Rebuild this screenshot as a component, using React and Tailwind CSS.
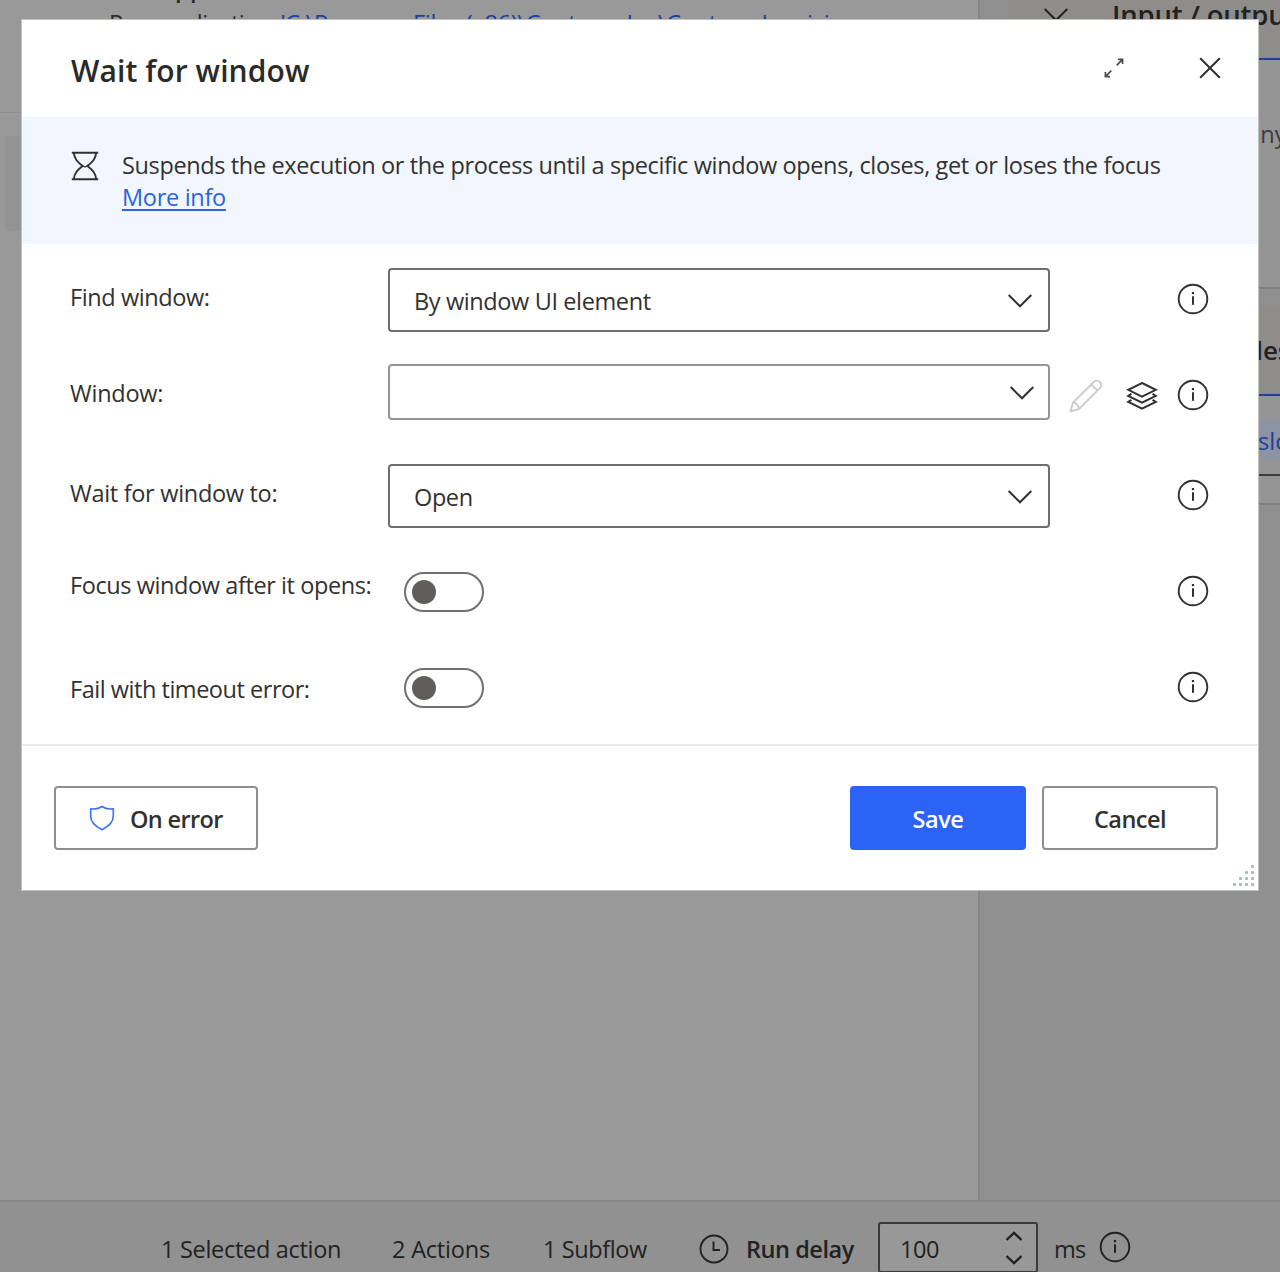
import React from "react";

function Info({ className = "" }) {
  return (
    <svg className={`h-8 w-8 shrink-0 ${className}`} viewBox="0 0 32 32" fill="none">
      <circle cx="16" cy="16" r="14.3" stroke="currentColor" strokeWidth="1.9" />
      <rect x="15" y="13.3" width="2" height="8.5" fill="currentColor" />
      <rect x="14.9" y="9" width="2.2" height="2.2" fill="currentColor" />
    </svg>
  );
}

function Chevron({ className = "" }) {
  return (
    <svg className={`h-4 w-[26px] shrink-0 ${className}`} viewBox="0 0 26 16" fill="none">
      <path d="M1.7 2 L13 13.3 L24.3 2" stroke="currentColor" strokeWidth="2" />
    </svg>
  );
}

function Hourglass() {
  return (
    <svg className="h-[32px] w-[30px] shrink-0" viewBox="0 0 30 32" fill="none" stroke="#323130" strokeWidth="1.9">
      <path d="M1.8 2.7 H28.2 M1.8 29.3 H28.2" />
      <path d="M3.8 2.7 C4.5 9 7 11.5 12.5 16 C7 20.5 4.5 23 3.8 29.3" />
      <path d="M26.2 2.7 C25.5 9 23 11.5 17.5 16 C23 20.5 25.5 23 26.2 29.3" />
      <path d="M12 15.5 L15 17 L18 15.5" strokeWidth="1.2" />
    </svg>
  );
}

function Expand() {
  return (
    <svg className="h-[22px] w-[22px]" viewBox="0 0 22 22" fill="none" stroke="#4a4a55" strokeWidth="1.7">
      <path d="M13.7 8.3 L19.3 2.7 M15 2.4 H19.6 V7" />
      <path d="M8.3 13.7 L2.7 19.3 M7 19.6 H2.4 V15" />
    </svg>
  );
}

function Close() {
  return (
    <svg className="h-[22px] w-[22px]" viewBox="0 0 22 22" fill="none">
      <path d="M1.2 1.2 L20.8 20.8 M20.8 1.2 L1.2 20.8" stroke="#323130" strokeWidth="2" />
    </svg>
  );
}

function Pencil() {
  return (
    <svg className="h-[34px] w-[34px] shrink-0" viewBox="0 0 34 34" fill="none" stroke="#cfcdcb" strokeWidth="1.9" strokeLinejoin="round">
      <path d="M1.5 32.5 L4 23.5 L25 2.8 C26.5 1.3 29 1.2 30.8 3 C32.6 4.8 32.6 7.3 31 8.9 L10 30 Z" />
      <path d="M22.3 5.5 L28.3 11.5 M4 23.5 C7.5 24 9.5 26 10 30" />
    </svg>
  );
}

function Layers() {
  return (
    <svg className="h-[30px] w-[32px] shrink-0" viewBox="0 0 32 30" fill="none" stroke="#323130" strokeWidth="2">
      <path d="M16 2 L29.8 8.8 L16 15.6 L2.2 8.8 Z" />
      <path d="M5.5 12.8 L2.2 14.8 L16 21.7 L29.8 14.8 L26.5 12.8" />
      <path d="M5.5 18.8 L2.2 20.8 L16 27.7 L29.8 20.8 L26.5 18.8" />
    </svg>
  );
}

function Shield() {
  return (
    <svg className="h-[26px] w-[26px]" viewBox="0 0 26 26" fill="none" stroke="#3a70f6" strokeWidth="1.6" strokeLinejoin="round">
      <path d="M13 1.5 C10.5 3.3 6 4.4 1.7 3.8 V11 C1.7 16.5 5 20.8 13 24.7 C21 20.8 24.3 16.5 24.3 11 V3.8 C20 4.4 15.5 3.3 13 1.5 Z" />
    </svg>
  );
}

function Clock() {
  return (
    <svg className="h-[30px] w-[30px] shrink-0" viewBox="0 0 30 30" fill="none" stroke="#222" strokeWidth="1.9">
      <circle cx="15" cy="15" r="13.5" />
      <path d="M14.5 7.5 V16 H21" />
    </svg>
  );
}

function Row({ label, labelClass, height, infoClass, children }) {
  return (
    <div className={`flex items-start ${height}`}>
      <div className={`w-[318px] shrink-0 ${labelClass}`}>{label}</div>
      <div className="flex w-[662px] shrink-0 items-start">{children}</div>
      <div className="flex-1" />
      <Info className={infoClass} />
    </div>
  );
}

function Select({ value, className = "" }) {
  return (
    <div className="flex h-16 w-full items-center justify-between rounded-[4px] border-2 border-[#6f6e6d] pr-[15px] pl-[24px]">
      <span className={`pt-[2px] ${className}`}>{value}</span>
      <Chevron className="mt-px" />
    </div>
  );
}

function Toggle() {
  return (
    <div className="ml-4 flex h-10 w-20 items-center rounded-full border-2 border-[#72706f] pl-[6px]">
      <div className="h-6 w-6 rounded-full bg-[#605e5c]" />
    </div>
  );
}

const DOTS = [1, 2, 3, 4];

function Dialog() {
  return (
    <div className="absolute top-[19px] left-[21px] flex h-[872px] w-[1238px] flex-col border border-[#c3c1bc] bg-white text-[#323130]">
      <header className="flex h-[97px] shrink-0 items-start pt-[31px] pr-[37px] pl-[49px]">
        <h1 className="flex-1 text-[30px] leading-[40px] font-semibold tracking-[0.1px] text-[#2b2a29]">Wait for window</h1>
        <div className="mt-[6px] mr-[74px]"><Expand /></div>
        <div className="mt-[6px]"><Close /></div>
      </header>
      <section className="flex h-[127px] shrink-0 items-start bg-[#f2f7ff] pl-[48px]">
        <div className="mt-[33px] mr-[22px]"><Hourglass /></div>
        <div className="pt-[32px] whitespace-nowrap">
          <p className="tracking-[-0.37px]">Suspends the execution or the process until a specific window opens, closes, get or loses the focus</p>
          <a className="tracking-[-0.3px] text-[#2a63e0] underline decoration-2 underline-offset-[3px]">More info</a>
        </div>
      </section>
      <section className="flex flex-1 flex-col pt-6 pr-[49px] pl-[48px] whitespace-nowrap">
        <Row label="Find window:" labelClass="mt-[13px] tracking-[-0.4px]" height="h-24" infoClass="mt-[15px]">
          <Select value="By window UI element" className="tracking-[-0.38px]" />
        </Row>
        <div className="flex h-[100px] items-start">
          <div className="mt-[13px] w-[318px] shrink-0 tracking-[-0.25px]">Window:</div>
          <div className="flex h-14 w-[662px] shrink-0 items-center justify-end rounded-[4px] border-2 border-[#979695] pr-[13px]">
            <Chevron className="mt-[2px]" />
          </div>
          <div className="mt-[15px] ml-[19px]"><Pencil /></div>
          <div className="mt-[17px] ml-[23px]"><Layers /></div>
          <div className="flex-1" />
          <Info className="mt-[15px]" />
        </div>
        <Row label="Wait for window to:" labelClass="mt-[13px] tracking-[-0.3px]" height="h-[108px]" infoClass="mt-[15px]">
          <Select value="Open" className="tracking-[-0.4px]" />
        </Row>
        <Row label="Focus window after it opens:" labelClass="-mt-[3px] tracking-[-0.41px]" height="h-24" infoClass="mt-[3px]">
          <Toggle />
        </Row>
        <Row label="Fail with timeout error:" labelClass="mt-[5px] tracking-[-0.47px]" height="h-10" infoClass="mt-[3px]">
          <Toggle />
        </Row>
      </section>
      <footer className="flex h-[146px] shrink-0 items-start border-t-2 border-[#ebebeb] pt-[40px] pr-[40px] pl-[32px] font-semibold">
        <button className="flex h-16 w-[204px] items-center rounded-[4px] border-2 border-[#8f8e8d] pl-[33px]">
          <Shield />
          <span className="ml-[15px] pt-[2px] tracking-[-0.65px]">On error</span>
        </button>
        <div className="flex-1" />
        <button className="h-16 w-[176px] rounded-[4px] bg-[#2a63f6] pt-[2px] tracking-[-0.4px] text-white">Save</button>
        <button className="ml-4 h-16 w-[176px] rounded-[4px] border-2 border-[#8f8e8d] pt-[2px] tracking-[-0.5px]">Cancel</button>
      </footer>
      <div className="absolute right-[4px] bottom-[4px] flex flex-col items-end gap-[3px]">
        {DOTS.map((n) => (
          <div key={n} className="flex gap-[3px]">
            {DOTS.slice(0, n).map((d) => (
              <i key={d} className="h-[3px] w-[3px] rounded-[1px] bg-[#aab5cc]" />
            ))}
          </div>
        ))}
      </div>
    </div>
  );
}

function Workspace() {
  return (
    <div className="relative h-[1200px] w-[978px] shrink-0 bg-[#999]">
      <div className="flex h-[113px] flex-col border-b border-[#8d8d8d] pl-[109px] whitespace-nowrap text-[#2a2a2a]">
        <div className="-mt-[28px] h-[34px] font-semibold tracking-[0.3px]">Run application</div>
        <div className="mt-px">
          <span className="tracking-[-0.5px]">Run application </span>
          <span className="ml-[3px] tracking-[-0.28px] text-[#1b3f9e]">'C:\Program Files (x86)\Contoso, Inc\Contoso Invoicing</span>
        </div>
      </div>
      <div className="mt-[23px] ml-[5px] h-[95px] rounded-l-[4px] bg-[#939393]" />
    </div>
  );
}

function SidePanel() {
  return (
    <aside className="h-[1200px] flex-1 overflow-hidden border-l-2 border-[#858585] bg-[#909090] pl-[28px] whitespace-nowrap">
      <div className="h-[289px] border-b-2 border-[#808080] bg-[#959595]">
        <div className="flex h-[60px] items-start border-b-2 border-[#1f429d] bg-[#8f8d8b] pl-[35px] text-[#222]">
          <Chevron className="mt-[7px]" />
          <span className="-mt-[5px] ml-[43px] text-[27.5px] leading-[40px] font-semibold tracking-[-0.2px]">Input / output variables</span>
        </div>
        <div className="mt-[58px] ml-[121px] text-[#3c3c3c]">Search for any</div>
      </div>
      <div className="mt-[16px] h-[200px] border-b-2 border-[#808080] bg-[#959595]">
        <div className="h-[91px] border-b-2 border-[#1f429d] bg-[#8f8d8b] pt-[25px] pl-[104px] text-[26px] leading-[40px] font-semibold text-[#222]">Flow variables</div>
        <div className="mt-[24px] h-[40px] w-full bg-[#8c93a3] pl-[250px] leading-[42px] text-[#1b3f9e]">slo</div>
        <div className="mt-[14px] h-[2px] bg-[#3d3d3d]" />
      </div>
    </aside>
  );
}

function StatusBar() {
  return (
    <div className="flex h-[72px] items-start overflow-hidden border-t-2 border-[#868686] bg-[#919191] pl-[161px] whitespace-nowrap text-[#222]">
      <span className="mt-[31px] w-[231px] tracking-[-0.3px]">1 Selected action</span>
      <span className="mt-[31px] w-[151px] tracking-[-0.2px]">2 Actions</span>
      <span className="mt-[31px] w-[156px] tracking-[-0.4px]">1 Subflow</span>
      <div className="mt-[32px]"><Clock /></div>
      <span className="mt-[31px] ml-[17px] w-[132px] font-semibold tracking-[-0.45px]">Run delay</span>
      <div className="mt-[20px] flex h-[51px] w-[160px] shrink-0 items-center justify-between rounded-[3px] border-2 border-[#3a3a3a] bg-[#989898] pr-[13px] pl-[20px]">
        <span className="pt-[3px] tracking-[-0.4px]">100</span>
        <svg className="h-[34px] w-[18px]" viewBox="0 0 18 34" fill="none" stroke="#222" strokeWidth="2.4">
          <path d="M1.5 9 L9 1.8 L16.5 9 M1.5 25 L9 32.2 L16.5 25" />
        </svg>
      </div>
      <span className="mt-[31px] ml-[16px] w-[45px] tracking-[-0.8px]">ms</span>
      <Info className="mt-[29px]" />
    </div>
  );
}

export default function App() {
  return (
    <div className="relative h-[1272px] w-[1280px] overflow-hidden bg-[#999] font-['Open_Sans','Noto_Sans',sans-serif] text-[23.5px] leading-[32px]">
      <div className="flex">
        <Workspace />
        <SidePanel />
      </div>
      <StatusBar />
      <Dialog />
    </div>
  );
}
